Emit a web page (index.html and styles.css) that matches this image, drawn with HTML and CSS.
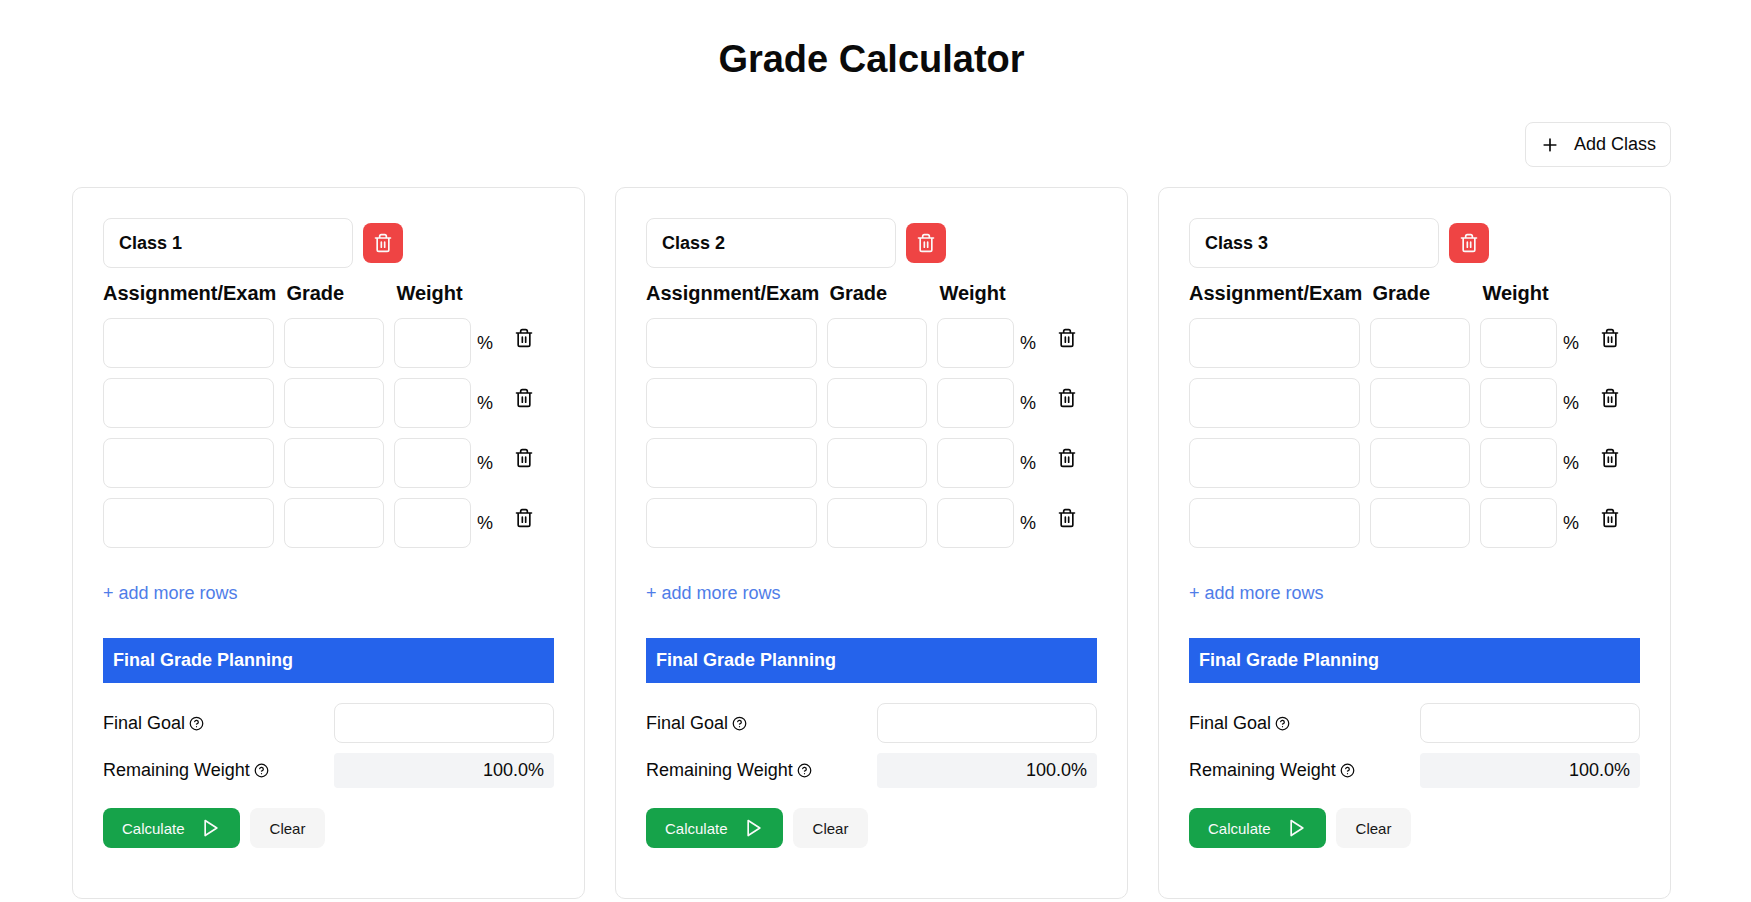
FILE: index.html
```html
<!DOCTYPE html>
<html lang="en">
<head>
<meta charset="utf-8">
<meta name="viewport" content="width=device-width, initial-scale=1">
<title>Grade Calculator</title>
<link rel="stylesheet" href="styles.css">
</head>
<body>
<svg class="sprite" aria-hidden="true">
  <symbol id="trash" viewBox="0 0 24 24"><path d="M3 6h18M19 6v14c0 1-1 2-2 2H7c-1 0-2-1-2-2V6M8 6V4c0-1 1-2 2-2h4c1 0 2 1 2 2v2M10 11v6M14 11v6"/></symbol>
  <symbol id="plus" viewBox="0 0 24 24"><path d="M5 12h14M12 5v14"/></symbol>
  <symbol id="play" viewBox="0 0 24 24"><path d="M5 3l14 9-14 9z"/></symbol>
  <symbol id="help" viewBox="0 0 24 24"><circle cx="12" cy="12" r="10"/><path d="M9.09 9a3 3 0 0 1 5.83 1c0 2-3 3-3 3M12 17h.01"/></symbol>
</svg>
<main class="page">
  <h1 class="title">Grade Calculator</h1>
  <div class="toolbar">
    <button class="add-class" type="button"><svg class="icon"><use href="#plus"/></svg>Add Class</button>
  </div>
  <div class="classes">

    <form class="card">
      <div class="card-head">
        <input class="field class-name" type="text" value="Class 1" aria-label="Class name">
        <button class="delete-class" type="button" aria-label="Delete class"><svg class="icon"><use href="#trash"/></svg></button>
      </div>
      <div class="columns"><span>Assignment/Exam</span><span>Grade</span><span>Weight</span></div>
      <div class="rows">
        <div class="row"><input class="field" type="text" aria-label="Assignment 1"><input class="field" type="text" aria-label="Grade 1"><div class="weight"><input class="field" type="text" aria-label="Weight 1"><span>%</span></div><button class="delete-row" type="button" aria-label="Delete row 1"><svg class="icon"><use href="#trash"/></svg></button></div>
        <div class="row"><input class="field" type="text" aria-label="Assignment 2"><input class="field" type="text" aria-label="Grade 2"><div class="weight"><input class="field" type="text" aria-label="Weight 2"><span>%</span></div><button class="delete-row" type="button" aria-label="Delete row 2"><svg class="icon"><use href="#trash"/></svg></button></div>
        <div class="row"><input class="field" type="text" aria-label="Assignment 3"><input class="field" type="text" aria-label="Grade 3"><div class="weight"><input class="field" type="text" aria-label="Weight 3"><span>%</span></div><button class="delete-row" type="button" aria-label="Delete row 3"><svg class="icon"><use href="#trash"/></svg></button></div>
        <div class="row"><input class="field" type="text" aria-label="Assignment 4"><input class="field" type="text" aria-label="Grade 4"><div class="weight"><input class="field" type="text" aria-label="Weight 4"><span>%</span></div><button class="delete-row" type="button" aria-label="Delete row 4"><svg class="icon"><use href="#trash"/></svg></button></div>
      </div>
      <button class="add-rows" type="button">+ add more rows</button>
      <h2 class="banner">Final Grade Planning</h2>
      <div class="plan">
        <label for="goal-1">Final Goal <svg class="icon help"><use href="#help"/></svg></label>
        <input class="field goal" id="goal-1" type="text">
        <label for="remaining-1">Remaining Weight <svg class="icon help"><use href="#help"/></svg></label>
        <output class="remaining" id="remaining-1">100.0%</output>
      </div>
      <div class="actions">
        <button class="calculate" type="button">Calculate<svg class="icon"><use href="#play"/></svg></button>
        <button class="clear" type="reset">Clear</button>
      </div>
    </form>

    <form class="card">
      <div class="card-head">
        <input class="field class-name" type="text" value="Class 2" aria-label="Class name">
        <button class="delete-class" type="button" aria-label="Delete class"><svg class="icon"><use href="#trash"/></svg></button>
      </div>
      <div class="columns"><span>Assignment/Exam</span><span>Grade</span><span>Weight</span></div>
      <div class="rows">
        <div class="row"><input class="field" type="text" aria-label="Assignment 1"><input class="field" type="text" aria-label="Grade 1"><div class="weight"><input class="field" type="text" aria-label="Weight 1"><span>%</span></div><button class="delete-row" type="button" aria-label="Delete row 1"><svg class="icon"><use href="#trash"/></svg></button></div>
        <div class="row"><input class="field" type="text" aria-label="Assignment 2"><input class="field" type="text" aria-label="Grade 2"><div class="weight"><input class="field" type="text" aria-label="Weight 2"><span>%</span></div><button class="delete-row" type="button" aria-label="Delete row 2"><svg class="icon"><use href="#trash"/></svg></button></div>
        <div class="row"><input class="field" type="text" aria-label="Assignment 3"><input class="field" type="text" aria-label="Grade 3"><div class="weight"><input class="field" type="text" aria-label="Weight 3"><span>%</span></div><button class="delete-row" type="button" aria-label="Delete row 3"><svg class="icon"><use href="#trash"/></svg></button></div>
        <div class="row"><input class="field" type="text" aria-label="Assignment 4"><input class="field" type="text" aria-label="Grade 4"><div class="weight"><input class="field" type="text" aria-label="Weight 4"><span>%</span></div><button class="delete-row" type="button" aria-label="Delete row 4"><svg class="icon"><use href="#trash"/></svg></button></div>
      </div>
      <button class="add-rows" type="button">+ add more rows</button>
      <h2 class="banner">Final Grade Planning</h2>
      <div class="plan">
        <label for="goal-2">Final Goal <svg class="icon help"><use href="#help"/></svg></label>
        <input class="field goal" id="goal-2" type="text">
        <label for="remaining-2">Remaining Weight <svg class="icon help"><use href="#help"/></svg></label>
        <output class="remaining" id="remaining-2">100.0%</output>
      </div>
      <div class="actions">
        <button class="calculate" type="button">Calculate<svg class="icon"><use href="#play"/></svg></button>
        <button class="clear" type="reset">Clear</button>
      </div>
    </form>

    <form class="card">
      <div class="card-head">
        <input class="field class-name" type="text" value="Class 3" aria-label="Class name">
        <button class="delete-class" type="button" aria-label="Delete class"><svg class="icon"><use href="#trash"/></svg></button>
      </div>
      <div class="columns"><span>Assignment/Exam</span><span>Grade</span><span>Weight</span></div>
      <div class="rows">
        <div class="row"><input class="field" type="text" aria-label="Assignment 1"><input class="field" type="text" aria-label="Grade 1"><div class="weight"><input class="field" type="text" aria-label="Weight 1"><span>%</span></div><button class="delete-row" type="button" aria-label="Delete row 1"><svg class="icon"><use href="#trash"/></svg></button></div>
        <div class="row"><input class="field" type="text" aria-label="Assignment 2"><input class="field" type="text" aria-label="Grade 2"><div class="weight"><input class="field" type="text" aria-label="Weight 2"><span>%</span></div><button class="delete-row" type="button" aria-label="Delete row 2"><svg class="icon"><use href="#trash"/></svg></button></div>
        <div class="row"><input class="field" type="text" aria-label="Assignment 3"><input class="field" type="text" aria-label="Grade 3"><div class="weight"><input class="field" type="text" aria-label="Weight 3"><span>%</span></div><button class="delete-row" type="button" aria-label="Delete row 3"><svg class="icon"><use href="#trash"/></svg></button></div>
        <div class="row"><input class="field" type="text" aria-label="Assignment 4"><input class="field" type="text" aria-label="Grade 4"><div class="weight"><input class="field" type="text" aria-label="Weight 4"><span>%</span></div><button class="delete-row" type="button" aria-label="Delete row 4"><svg class="icon"><use href="#trash"/></svg></button></div>
      </div>
      <button class="add-rows" type="button">+ add more rows</button>
      <h2 class="banner">Final Grade Planning</h2>
      <div class="plan">
        <label for="goal-3">Final Goal <svg class="icon help"><use href="#help"/></svg></label>
        <input class="field goal" id="goal-3" type="text">
        <label for="remaining-3">Remaining Weight <svg class="icon help"><use href="#help"/></svg></label>
        <output class="remaining" id="remaining-3">100.0%</output>
      </div>
      <div class="actions">
        <button class="calculate" type="button">Calculate<svg class="icon"><use href="#play"/></svg></button>
        <button class="clear" type="reset">Clear</button>
      </div>
    </form>

  </div>
</main>
</body>
</html>
```

FILE: styles.css
```css
* { box-sizing: border-box; }
body {
  margin: 0;
  background: #fff;
  color: #0a0a0a;
  font: 18px/25px "Liberation Sans", Arial, sans-serif;
}
button, input { font: inherit; color: inherit; }
button { border: 0; padding: 0; background: none; cursor: pointer; }
.sprite { display: none; }
.icon {
  width: 20px;
  height: 20px;
  flex: none;
  fill: none;
  stroke: currentColor;
  stroke-width: 2;
  stroke-linecap: round;
  stroke-linejoin: round;
}
.page { padding: 37px 80px 0 72px; }
.title { margin: 0; font-size: 38px; line-height: 44px; text-align: center; }
.toolbar { display: flex; justify-content: flex-end; margin: 41px 0 20px; }
.add-class {
  display: flex;
  align-items: center;
  gap: 14px;
  height: 45px;
  padding: 0 14px;
  border: 1px solid #e5e5e5;
  border-radius: 8px;
}
.classes { display: grid; grid-template-columns: repeat(3, 1fr); gap: 30px; }
.card {
  min-width: 0;
  padding: 30px 30px 50px;
  border: 1px solid #e5e5e5;
  border-radius: 10px;
}
.field {
  width: 100%;
  min-width: 0;
  height: 50px;
  padding: 0 15px;
  border: 1px solid #e5e5e5;
  border-radius: 8px;
  background: #fff;
}
.card-head { display: flex; align-items: center; gap: 10px; }
.class-name { width: 250px; font-weight: 700; }
.delete-class {
  display: grid;
  place-items: center;
  width: 40px;
  height: 40px;
  border-radius: 8px;
  background: #ef4444;
  color: #fafafa;
}
.columns {
  display: grid;
  grid-template-columns: max-content 100px 1fr;
  gap: 10px;
  font-size: 20px;
  font-weight: 700;
  line-height: 50px;
}
.rows { display: grid; gap: 10px; }
.row {
  display: grid;
  grid-template-columns: 171fr 100fr 99fr 51fr;
  gap: 10px;
}
.weight { display: flex; align-items: center; gap: 6px; }
.delete-row { display: grid; place-items: center; width: 42px; height: 40px; }
.add-rows { display: block; margin: 33px 0 32px; color: #4f7de8; }
.banner {
  margin: 0 0 20px;
  padding: 10px;
  background: #2563eb;
  color: #fff;
  font-size: 18px;
  line-height: 25px;
}
.plan {
  display: grid;
  grid-template-columns: 1fr 1fr;
  align-items: center;
  gap: 10px;
}
.plan label { display: flex; align-items: center; gap: 4px; }
.help { width: 15px; height: 15px; }
.goal { height: 40px; }
.remaining {
  padding: 5px 10px;
  border-radius: 4px;
  background: #f3f4f6;
  text-align: right;
}
.actions { display: flex; gap: 10px; margin-top: 20px; font-size: 15px; }
.calculate, .clear {
  display: flex;
  align-items: center;
  gap: 16px;
  height: 40px;
  padding: 0 19px;
  border-radius: 8px;
}
.calculate { background: #16a34a; color: #fafafa; }
.clear { padding: 0 20px; background: #f5f5f5; color: #171717; }
```
